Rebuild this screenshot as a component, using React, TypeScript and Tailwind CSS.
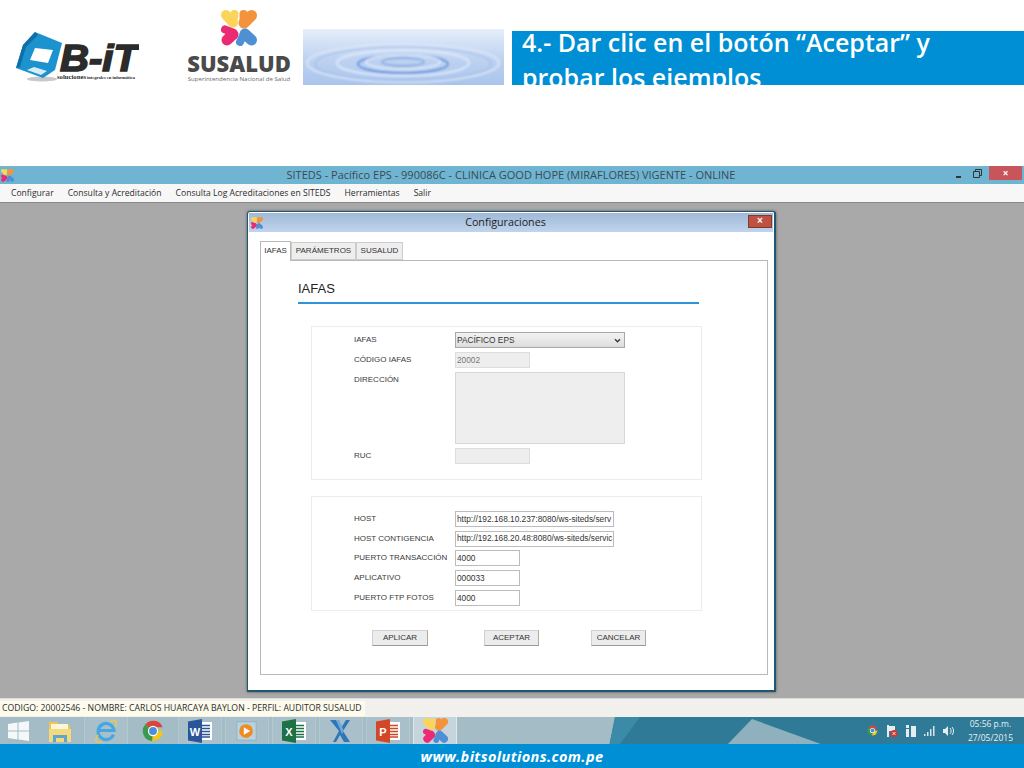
import React from "react";

const Flower = ({ className }: { className: string }) => (
  <svg viewBox="0 0 36 36" className={className} strokeLinecap="round" fill="none">
    <g stroke="#fbd55b">
      <path d="M5 5 12 12.500" strokeWidth="10" />
      <path d="M13.500 4 12.500 11" strokeWidth="8" />
    </g>
    <g stroke="#f3933b">
      <path d="M30.500 5.500 23 13" strokeWidth="11" />
      <path d="M22.500 4 22.500 10" strokeWidth="8" />
    </g>
    <g stroke="#ec2a74">
      <path d="M4 19.500 12 22.500" strokeWidth="8" />
      <path d="M6 30 12 24.500" strokeWidth="11" />
    </g>
    <g stroke="#4f8fd4">
      <path d="M30.500 30 24 24" strokeWidth="11" />
      <path d="M19 32 22.500 25" strokeWidth="8" />
    </g>
  </svg>
);

const BitLogo = () => (
  <svg viewBox="0 0 124 54" className="w-[124px] h-[54px] shrink-0">
    <ellipse cx="27" cy="49" rx="15" ry="2.500" fill="#c9c9c9" />
    <path d="M20 2 47 13 40 40 28 48 1 38 8 15Z" fill="#1c92cf" />
    <path d="M20 2 8 15 1 38 5 37 11 17 23 5Z" fill="#0f6fa6" />
    <path d="M20 18 38 20 33 33 15 30Z" fill="#ffffff" />
    <path d="M12 40 26 45 32 41 19 37Z" fill="#d6edf8" />
    <text x="45" y="41" fontFamily="Liberation Sans, sans-serif" fontWeight="700" fontStyle="italic" fontSize="37" textLength="78" lengthAdjust="spacingAndGlyphs" fill="#2b2b2b" stroke="#2b2b2b" strokeWidth="1.600">B-iT</text>
    <text x="42" y="49" fontFamily="Liberation Serif, serif" fontWeight="700" fontSize="6.500" textLength="29" lengthAdjust="spacingAndGlyphs" fill="#2b2b2b">soluciones</text>
    <text x="72" y="49" fontFamily="Liberation Serif, serif" fontWeight="700" fontSize="4.400" textLength="48" lengthAdjust="spacingAndGlyphs" fill="#2b2b2b">integrales en informática</text>
  </svg>
);

const SusaludLogo = () => (
  <div className="flex flex-col items-center w-[104px] shrink-0">
    <Flower className="w-[36px] h-[36px]" />
    <div className="font-['Open_Sans',sans-serif] font-extrabold text-[#4a4a4a] text-[22px] leading-[22px] mt-[6px]">SUSALUD</div>
    <div className="font-['Open_Sans',sans-serif] text-[#6a6a6a] text-[6.1px] leading-[8px] mt-[1px] whitespace-nowrap">Superintendencia Nacional de Salud</div>
  </div>
);

const Ripple = () => (
  <svg viewBox="0 0 201 56" preserveAspectRatio="none" className="w-[201px] h-[56px] shrink-0">
    <defs>
      <linearGradient id="rip" x1="0" y1="0" x2="0" y2="1">
        <stop offset="0" stopColor="#e6eefa" />
        <stop offset="0.5" stopColor="#c0d4f1" />
        <stop offset="1" stopColor="#a9c4ec" />
      </linearGradient>
      <filter id="bl"><feGaussianBlur stdDeviation="1" /></filter>
    </defs>
    <rect width="201" height="56" fill="url(#rip)" />
    <g fill="none" filter="url(#bl)">
      <ellipse cx="100" cy="34" rx="96" ry="19" stroke="#dbe6f8" strokeWidth="2" />
      <ellipse cx="100" cy="35" rx="88" ry="17" stroke="#9dbbe9" strokeWidth="1.200" />
      <ellipse cx="100" cy="34" rx="66" ry="13" stroke="#dfe9fa" strokeWidth="2" />
      <ellipse cx="100" cy="35" rx="45" ry="9" stroke="#5f8edc" strokeWidth="1.700" />
      <ellipse cx="100" cy="33" rx="37" ry="7" stroke="#e6eefb" strokeWidth="1.600" />
      <ellipse cx="100" cy="33" rx="21" ry="4" stroke="#7ea2de" strokeWidth="1.300" />
    </g>
  </svg>
);

const Inp = ({ w, children, dim }: { w: string; children?: React.ReactNode; dim?: boolean }) => (
  <div className={`${w} h-[16px] border flex items-center pl-[1px] text-[8.300px] whitespace-nowrap overflow-hidden ${dim ? "bg-[#eeeeee] border-[#dddddd] text-[#777777]" : "bg-white border-[#bcbcbc] text-[#333333]"}`}>
    {children}
  </div>
);

const Row = ({ label, children }: { label: string; children: React.ReactNode }) => (
  <div className="flex items-center h-[16px]">
    <div className="w-[101px] text-[8px] text-[#3a3a3a] whitespace-nowrap">{label}</div>
    {children}
  </div>
);

const Btn = ({ children, w }: { children: string; w: string }) => (
  <div className={`${w} h-[16px] bg-[#ececec] border border-[#d0d0d0] border-b-[#999999] border-r-[#aaaaaa] flex items-center justify-center text-[8px] text-[#333333]`}>
    {children}
  </div>
);

const Tile = ({ children, active }: { children: React.ReactNode; active?: boolean }) => (
  <div className={`w-[44px] h-[29px] flex items-center justify-center border ${active ? "bg-[#c5d5db] border-[#dfe8ec]" : "bg-[#a9bfc9] border-[#b4c8d0]"}`}>
    {children}
  </div>
);

const WinIcon = () => (
  <svg viewBox="0 0 21 20" className="w-[21px] h-[20px]">
    <path d="M0 3 9.500 1.600V9.500H0ZM10.500 1.400 21 0V9.500H10.500ZM0 10.500H9.500V18.400L0 17ZM10.500 10.500H21V20L10.500 18.600Z" fill="#f5f8f9" />
  </svg>
);
const FolderIcon = () => (
  <svg viewBox="0 0 24 24" className="w-[24px] h-[24px]">
    <path d="M1 3h8l2 3h11v5H1Z" fill="#f2c64e" />
    <path d="M3 5h17v6H3Z" fill="#fdf6d8" />
    <path d="M1 10h22v13H1Z" fill="#f5d97e" />
    <path d="M5 16h14v7h-3v-4H8v4H5Z" fill="#5aa7cf" />
  </svg>
);
const IeIcon = () => (
  <svg viewBox="0 0 24 24" className="w-[24px] h-[24px]" fill="none">
    <path d="M19.500 15.500A8 8 0 1 1 20 11.500H5" stroke="#45a8e2" strokeWidth="3.200" />
    <path d="M4 16C0 22 2 25 8 22M16 3c5-3 8-1 5 5" stroke="#efc84a" strokeWidth="1.400" />
  </svg>
);
const ChromeIcon = ({ s = 22 }: { s?: number }) => (
  <svg viewBox="0 0 24 24" style={{ width: s, height: s }}>
    <path d="M12 12 3.500 5A11 11 0 0 1 22.500 8H12Z" fill="#dc4437" />
    <path d="M12 12h10.500A11 11 0 0 1 11 23Z" fill="#f5c518" />
    <path d="M12 12 11 23A11 11 0 0 1 3.500 5Z" fill="#3c9a4a" />
    <circle cx="12" cy="12" r="5.600" fill="#ffffff" />
    <circle cx="12" cy="12" r="4.300" fill="#4a90d9" />
  </svg>
);
const OfficeIcon = ({ color, ch }: { color: string; ch: string }) => (
  <svg viewBox="0 0 24 24" className="w-[24px] h-[24px]">
    <rect x="11" y="3" width="13" height="18" fill="#ffffff" />
    <path d="M14 6.500h8M14 9.500h8M14 12.500h8M14 15.500h8M14 18h8" stroke={color} strokeWidth="1.300" />
    <path d="M0 2.500 14 0V24L0 21.500Z" fill={color} />
    <text x="7" y="16.500" textAnchor="middle" fontFamily="Liberation Sans, sans-serif" fontWeight="700" fontSize="11" fill="#ffffff">{ch}</text>
  </svg>
);
const MediaIcon = () => (
  <svg viewBox="0 0 24 24" className="w-[22px] h-[22px]">
    <rect x="1" y="2" width="21" height="20" fill="#b9d2de" stroke="#8fb2c4" />
    <circle cx="11" cy="12" r="7.500" fill="#f08a22" />
    <path d="M8.500 8 15.500 12 8.500 16Z" fill="#ffffff" />
  </svg>
);
const XIcon = () => (
  <svg viewBox="0 0 24 24" className="w-[24px] h-[24px]">
    <path d="M1 1h6l5 8 5-8h4l-7 11 7 11h-6l-4-7-4 7H4l6-11Z" fill="#2f76b8" />
    <path d="M7 1h3l5 11-2 3Z" fill="#6fa8d8" />
  </svg>
);

const Taskbar = () => (
  <div className="relative h-[30px] bg-[#a3bcc6] flex items-center overflow-hidden">
    <svg viewBox="0 0 1024 30" className="absolute inset-0 w-[1024px] h-[30px]">
      <path d="M615 0H1024V30H609Z" fill="#2f7a96" />
      <path d="M615 0H640L618 30H609Z" fill="#3b8aa8" />
      <path d="M752 2 829 30H725Z" fill="#8fb0bd" />
    </svg>
    <div className="relative flex items-center pl-[8px]">
      <WinIcon />
      <div className="ml-[19px]"><FolderIcon /></div>
      <div className="flex gap-[3px] ml-[12px]">
        <Tile><IeIcon /></Tile>
        <div className="w-[44px] h-[29px] flex items-center justify-center"><ChromeIcon /></div>
        <Tile><OfficeIcon color="#2a5699" ch="W" /></Tile>
        <Tile><MediaIcon /></Tile>
        <Tile><OfficeIcon color="#1e7145" ch="X" /></Tile>
        <Tile><XIcon /></Tile>
        <Tile><OfficeIcon color="#d24726" ch="P" /></Tile>
        <Tile active><Flower className="w-[25px] h-[25px]" /></Tile>
      </div>
    </div>
    <div className="relative ml-auto flex items-center pr-[11px] text-[#e8f1f4]">
      <ChromeIcon s={11} />
      <svg viewBox="0 0 12 12" className="w-[12px] h-[12px] ml-[8px]">
        <path d="M1 0h2v12H1ZM3 1h6v5H3Z" fill="#e6edf0" />
        <circle cx="8" cy="8.500" r="3.500" fill="#d8332b" />
        <path d="M6.500 7 9.500 10M9.500 7 6.500 10" stroke="#ffffff" strokeWidth="0.800" />
      </svg>
      <svg viewBox="0 0 12 14" className="w-[12px] h-[14px] ml-[7px]">
        <path d="M1 1h3v3H1ZM1 5h3v8H1ZM6 2h5v11H6Z" fill="#e6edf0" />
      </svg>
      <svg viewBox="0 0 12 10" className="w-[12px] h-[10px] ml-[6px]">
        <path d="M1 8h1.500v2H1ZM4 6h1.500v4H4ZM7 3h1.500v7H7ZM10 0h1.500v10H10Z" fill="#d8e4e9" />
      </svg>
      <svg viewBox="0 0 12 12" className="w-[12px] h-[12px] ml-[7px]">
        <path d="M1 4h2l3-3v10L3 8H1Z" fill="#e6edf0" />
        <path d="M8 3c1.500 2 1.500 4 0 6M10 2c2 2.500 2 5.500 0 8" fill="none" stroke="#e6edf0" />
      </svg>
      <div className="ml-[14px] flex flex-col items-center text-[8.500px] leading-[14px] font-['Open_Sans',sans-serif]">
        <div>05:56 p.m.</div>
        <div>27/05/2015</div>
      </div>
    </div>
  </div>
);

export default function App() {
  return (
    <div className="w-[1024px] h-[768px] overflow-hidden bg-white flex flex-col font-['Open_Sans',sans-serif]">
      <div className="h-[166px] shrink-0 relative">
        <div className="flex items-start">
          <div className="ml-[15px] mt-[30px]"><BitLogo /></div>
          <div className="ml-[48px] mt-[10px]"><SusaludLogo /></div>
          <div className="ml-[12px] mt-[29px]"><Ripple /></div>
          <div className="ml-[8px] mt-[31px] w-[512px] h-[54px] bg-[#008fd5] overflow-hidden pl-[10px] text-white font-semibold text-[25px] leading-[35px]">
            <div className="-mt-[6px]">4.- Dar clic en el botón “Aceptar” y<br />probar los ejemplos</div>
          </div>
        </div>
      </div>

      <div className="h-[18px] shrink-0 bg-[#6fb5d2] flex items-center relative">
        <Flower className="w-[13px] h-[13px] ml-[1px]" />
        <div className="flex-1 text-center text-[11px] text-[#3a4a55] pl-[52px] whitespace-nowrap">SITEDS - Pacífico EPS - 990086C - CLINICA GOOD HOPE (MIRAFLORES) VIGENTE - ONLINE</div>
        <div className="flex items-center h-full">
          <div className="w-[5px] h-[2px] bg-[#333333] mt-[3px]" />
          <svg viewBox="0 0 9 9" className="w-[9px] h-[9px] ml-[12px] -mt-[3px]">
            <path d="M.5 2.500h6v6h-6ZM2.500 2.500V.5h6v6h-2" fill="none" stroke="#333333" />
          </svg>
          <div className="ml-[7px] mr-[2px] w-[33px] h-[14px] -mt-[4px] bg-[#c9555c] flex items-center justify-center text-white text-[10px] font-bold">×</div>
        </div>
      </div>

      <div className="h-[18px] shrink-0 bg-[#f7f7f7] flex items-center pl-[11px] text-[8.600px] text-[#2c2c2c] gap-[14px] whitespace-nowrap">
        <span>Configurar</span>
        <span>Consulta y Acreditación</span>
        <span>Consulta Log Acreditaciones en SITEDS</span>
        <span>Herramientas</span>
        <span>Salir</span>
      </div>

      <div className="h-[496px] shrink-0 bg-[#a9a9a9] border-t border-[#888888] pl-[247px] pt-[8px] font-['Liberation_Sans',sans-serif]">
        <div className="w-[529px] h-[481px] border border-[#1f5673] rounded-t-[3px] border-b-2 border-r-2 bg-white flex flex-col p-[1px] shadow-[0_0_3px_#555555]">
          <div className="h-[19px] shrink-0 bg-gradient-to-b from-[#9fb9d8] to-[#c0d4ec] flex items-center relative">
            <Flower className="w-[12px] h-[12px] ml-[2px]" />
            <div className="flex-1 text-center text-[10.700px] text-[#222222] font-['Open_Sans',sans-serif]">Configuraciones</div>
            <div className="w-[24px] h-[13px] mr-[1px] -mt-[3px] bg-[#c0503f] border border-[#7c3a30] flex items-center justify-center text-white text-[10px] font-bold leading-none">×</div>
          </div>
          <div className="flex-1 flex flex-col pl-[11px] pr-[5px] pt-[8px] pb-[14px]">
            <div className="flex items-end h-[20px] shrink-0 text-[8px] text-[#333333]">
              <div className="h-[20px] w-[31px] bg-white border border-b-0 border-[#b8b8b8] flex items-center justify-center -mb-[1px] relative pb-[2px]">IAFAS</div>
              <div className="h-[18px] w-[65px] bg-[#eeeeee] border border-[#cccccc] flex items-center justify-center">PARÁMETROS</div>
              <div className="h-[18px] w-[47px] bg-[#eeeeee] border border-[#cccccc] flex items-center justify-center">SUSALUD</div>
            </div>
            <div className="flex-1 border border-[#b8b8b8] pt-[19px] pl-[37px]">
              <div className="w-[401px] border-b-2 border-[#2f94dc] h-[24px] text-[13px] leading-[18px] text-[#222222]">IAFAS</div>
              <div className="ml-[13px] mt-[22px] w-[391px] h-[154px] border border-[#ececec] pl-[42px] pt-[5px] flex flex-col">
                <Row label="IAFAS">
                  <div className="w-[170px] h-[16px] bg-gradient-to-b from-[#f3f3f3] to-[#dddddd] border border-[#a8a8a8] flex items-center justify-between pl-[1px] pr-[2px] text-[8.300px] text-[#333333]">
                    <span>PACÍFICO EPS</span>
                    <svg viewBox="0 0 8 6" className="w-[7px] h-[5px] mr-[1px]"><path d="M1 1.500 4 4.500 7 1.500" fill="none" stroke="#333333" strokeWidth="1.500" /></svg>
                  </div>
                </Row>
                <div className="mt-[4px]"><Row label="CÓDIGO IAFAS"><Inp w="w-[75px]" dim>20002</Inp></Row></div>
                <div className="mt-[4px] flex items-start">
                  <div className="w-[101px] h-[16px] flex items-center text-[8px] text-[#3a3a3a]">DIRECCIÓN</div>
                  <div className="w-[170px] h-[72px] bg-[#eeeeee] border border-[#d8d8d8]" />
                </div>
                <div className="mt-[4px]"><Row label="RUC"><Inp w="w-[75px]" dim /></Row></div>
              </div>
              <div className="ml-[13px] mt-[16px] w-[391px] h-[115px] border border-[#ececec] pl-[42px] pt-[14px] flex flex-col gap-[3.700px]">
                <Row label="HOST"><Inp w="w-[159px]">http://192.168.10.237:8080/ws-siteds/serv</Inp></Row>
                <Row label="HOST CONTIGENCIA"><Inp w="w-[159px]">http://192.168.20.48:8080/ws-siteds/servic</Inp></Row>
                <Row label="PUERTO TRANSACCIÓN"><Inp w="w-[65px]">4000</Inp></Row>
                <Row label="APLICATIVO"><Inp w="w-[65px]">000033</Inp></Row>
                <Row label="PUERTO FTP FOTOS"><Inp w="w-[65px]">4000</Inp></Row>
              </div>
              <div className="ml-[74px] mt-[19px] flex">
                <Btn w="w-[56px]">APLICAR</Btn>
                <div className="ml-[56px]"><Btn w="w-[55px]">ACEPTAR</Btn></div>
                <div className="ml-[52px]"><Btn w="w-[55px]">CANCELAR</Btn></div>
              </div>
            </div>
          </div>
        </div>
      </div>

      <div className="h-[19px] shrink-0 bg-[#f1f0ed] border-t border-[#dcdcdc] flex items-start pt-[2px]">
        <div className="bg-[#fdfbec] h-[15px] w-[365px] pl-[2px] flex items-center text-[8.700px] text-[#2c2c2c] whitespace-nowrap">CODIGO: 20002546 - NOMBRE: CARLOS HUARCAYA BAYLON - PERFIL: AUDITOR SUSALUD</div>
      </div>

      <Taskbar />

      <div className="flex-1 bg-[#008fd5] flex items-center justify-center text-white italic font-bold text-[14.500px] tracking-[0.4px] pt-[2px]">www.bitsolutions.com.pe</div>
    </div>
  );
}
